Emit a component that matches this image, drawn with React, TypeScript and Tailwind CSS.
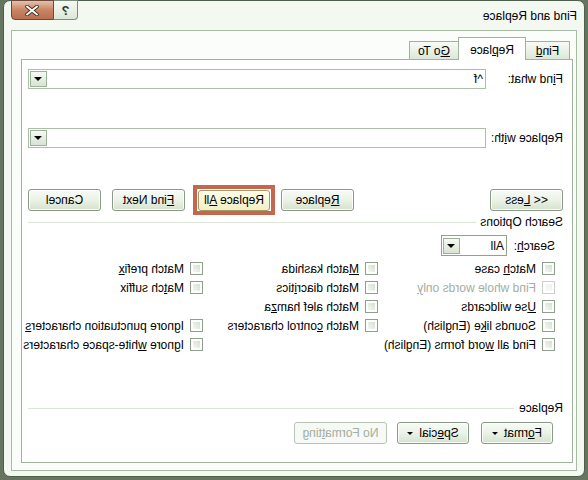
import React from "react";

// The reference is the Word "Find and Replace" dialog, mirrored horizontally.
// Build it the normal way round, then flip the whole page.

function K({ c }: { c: string }) {
  return <span className="underline underline-offset-[1px]">{c}</span>;
}

function Btn({ children, className = "" }: { children: React.ReactNode; className?: string }) {
  return (
    <div
      className={`flex h-[22px] items-center justify-center rounded-[3px] border border-[#8a9a87] bg-linear-to-b from-[#f8fbf6] via-[#ebf2e7] to-[#d5e2ce] text-[12px] text-black shadow-[inset_0_0_0_1px_rgba(255,255,255,0.85)] ${className}`}
    >
      {children}
    </div>
  );
}

function Arrow() {
  return (
    <div className="m-px flex h-[16px] w-[17px] items-center justify-center border border-[#9cb199] bg-linear-to-b from-[#f5f9f3] to-[#d8e4d3]">
      <div className="h-0 w-0 border-x-[4px] border-t-[4px] border-x-transparent border-t-black" />
    </div>
  );
}

function Check({ label, disabled = false }: { label: React.ReactNode; disabled?: boolean }) {
  return (
    <div className="flex h-[19px] items-center gap-[6px]">
      <div className={`h-[13px] w-[13px] border bg-white p-[2px] ${disabled ? "border-[#c9d3c7]" : "border-[#8e9f8b]"}`}>
        <div className={`h-full w-full bg-linear-to-br ${disabled ? "from-[#eef2ed] to-[#fafcf9]" : "from-[#d6dfd3] to-[#f4f8f3]"}`} />
      </div>
      <span className={`whitespace-nowrap text-[12px] ${disabled ? "text-[#a3ada1]" : "text-black"}`}>{label}</span>
    </div>
  );
}

function Empty() {
  return <div className="h-[19px]" />;
}

export default function App() {
  return (
    <div className="h-[480px] w-[588px] overflow-hidden bg-[#66755f] font-['Liberation_Sans',Arial,sans-serif] -scale-x-100">
      <div className="ml-[3px] flex h-[477px] w-[582px] flex-col rounded-[7px] border border-[#4f5d4c] bg-[#f3f8f1] px-[7px] pb-[5px]">
        {/* title bar */}
        <div className="flex h-[29px] items-start">
          <div className="mt-[8px] flex-1 text-[12px] leading-[14px] text-black">Find and Replace</div>
          <div className="-mt-px flex">
            <div className="flex h-[20px] w-[24px] items-center justify-center rounded-bl-[4px] border border-r-0 border-[#7d8c7a] bg-linear-to-b from-[#f6faf4] to-[#dce7d7] text-[13px] font-bold leading-none text-[#2e3a2c]">
              ?
            </div>
            <div className="flex h-[20px] w-[43px] items-center justify-center rounded-br-[4px] border border-[#6b4a3d] bg-linear-to-b from-[#e4c0ab] via-[#c98564] to-[#b96e4f]">
              <svg width="14" height="11" viewBox="0 0 14 11">
                <path d="M2 1.5 L12 9.5 M12 1.5 L2 9.5" stroke="#3b2a22" strokeWidth="3.6" strokeLinecap="round" />
                <path d="M2 1.5 L12 9.5 M12 1.5 L2 9.5" stroke="#ffffff" strokeWidth="2" strokeLinecap="round" />
              </svg>
            </div>
          </div>
        </div>

        {/* client area */}
        <div className="flex h-[441px] w-[566px] flex-col border border-[#a8b9a5] bg-[#fafdf9]">
          {/* tabs */}
          <div className="flex h-[28px] items-end pl-[6px]">
            <div className="flex h-[18px] w-[45px] items-center justify-center border border-b-0 border-[#9fb39c] bg-linear-to-b from-[#f7fbf5] to-[#dde8d8] text-[12px]">
              <span>Fin<K c="d" /></span>
            </div>
            <div className="relative z-10 -mb-px -ml-[1px] flex h-[23px] w-[68px] items-start justify-center border border-b-0 border-[#9fb39c] bg-white pt-[3px] text-[12px]">
              <span>Re<K c="p" />lace</span>
            </div>
            <div className="-ml-[1px] flex h-[18px] w-[50px] items-center justify-center border border-b-0 border-[#9fb39c] bg-linear-to-b from-[#f7fbf5] to-[#dde8d8] text-[12px]">
              <span><K c="G" />o To</span>
            </div>
          </div>

          {/* tab panel */}
          <div className="ml-[3px] flex h-[404px] w-[552px] flex-col border border-[#9fb39c] bg-white text-[12px] text-black">
            <div className="mt-[9px] flex h-[20px] items-center pl-[9px]">
              <div className="w-[77px]">
                F<K c="i" />nd what:
              </div>
              <div className="flex h-[20px] w-[458px] items-center border border-[#a9bfa6] bg-white">
                <span className="flex-1 pl-[2px]">^f</span>
                <Arrow />
              </div>
            </div>

            <div className="mt-[39px] flex h-[20px] items-center pl-[9px]">
              <div className="w-[77px]">
                Replace w<K c="i" />th:
              </div>
              <div className="flex h-[20px] w-[458px] items-center border border-[#a9bfa6] bg-white">
                <span className="flex-1" />
                <Arrow />
              </div>
            </div>

            {/* buttons */}
            <div className="mt-[41px] flex h-[22px] items-center pl-[9px]">
              <Btn className="w-[73px]">
                <span>&lt;&lt; <K c="L" />ess</span>
              </Btn>
              <Btn className="ml-[136px] w-[73px]">
                <span><K c="R" />eplace</span>
              </Btn>
              <div className="-my-[4px] ml-[6px] flex h-[30px] w-[82px] items-center justify-center border-[4px] border-[#c5664f] bg-white">
                <div className="flex h-[21px] w-[72px] items-center justify-center rounded-[3px] border border-[#a49a6a] bg-linear-to-b from-[#fffde8] to-[#f1efc6] text-[12px]">
                  <span>Replace <K c="A" />ll</span>
                </div>
              </div>
              <Btn className="ml-[8px] w-[73px] border-[#3f98ad] shadow-[inset_0_0_0_1px_#8fd0de]">
                <span><K c="F" />ind Next</span>
              </Btn>
              <Btn className="ml-[11px] w-[73px]">
                <span>Cancel</span>
              </Btn>
            </div>

            {/* search options */}
            <div className="mt-[4px] flex h-[14px] items-center pl-[9px] pr-[6px]">
              <span>Search Options</span>
              <div className="ml-[4px] h-px flex-1 bg-[#dbe5d8]" />
            </div>

            <div className="mt-[6px] flex h-[21px] items-center pl-[17px]">
              <div className="w-[48px]">
                Searc<K c="h" />:
              </div>
              <div className="flex h-[21px] w-[66px] items-center border border-[#8fa28c] bg-white">
                <span className="flex-1 pl-[2px]">All</span>
                <Arrow />
              </div>
            </div>

            <div className="mt-[3px] grid grid-cols-[177px_175px_1fr] pl-[17px]">
              <Check label={<>Matc<K c="h" /> case</>} />
              <Check label={<><K c="M" />atch kashida</>} />
              <Check label={<>Match prefi<K c="x" /></>} />

              <Check disabled label={<>Find whole words onl<K c="y" /></>} />
              <Check label={<>Match diacr<K c="i" />tics</>} />
              <Check label={<>Ma<K c="t" />ch suffix</>} />

              <Check label={<><K c="U" />se wildcards</>} />
              <Check label={<>Match alef ham<K c="z" />a</>} />
              <Empty />

              <Check label={<>Sounds li<K c="k" />e (English)</>} />
              <Check label={<>Match <K c="c" />ontrol characters</>} />
              <Check label={<>Ignore punctuation character<K c="s" /></>} />

              <Check label={<>Find all <K c="w" />ord forms (English)</>} />
              <Empty />
              <Check label={<>Ignore <K c="w" />hite-space characters</>} />
            </div>

            {/* replace section */}
            <div className="mt-[47px] flex h-[14px] items-center pl-[9px] pr-[6px]">
              <span>Replace</span>
              <div className="ml-[5px] h-px flex-1 bg-[#dbe5d8]" />
            </div>

            <div className="mt-[7px] flex h-[22px] items-center pl-[19px]">
              <Btn className="w-[72px] gap-[6px]">
                <span>
                  F<K c="o" />rmat
                </span>
                <span className="h-0 w-0 border-x-[3px] border-t-[3px] border-x-transparent border-t-black" />
              </Btn>
              <Btn className="ml-[12px] w-[72px] gap-[6px]">
                <span>
                  Sp<K c="e" />cial
                </span>
                <span className="h-0 w-0 border-x-[3px] border-t-[3px] border-x-transparent border-t-black" />
              </Btn>
              <div className="ml-[10px] flex h-[22px] w-[93px] items-center justify-center rounded-[3px] border border-[#b8c5b5] bg-[#f6f9f5] text-[12px] text-[#a3ada1]">
                <span>No Forma<K c="t" />ting</span>
              </div>
            </div>
          </div>
        </div>
      </div>
    </div>
  );
}
